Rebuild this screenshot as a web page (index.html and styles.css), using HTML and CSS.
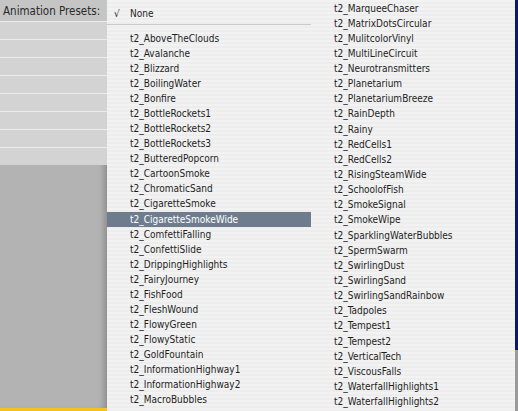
FILE: index.html
```html
<!DOCTYPE html>
<html>
<head>
<meta charset="utf-8">
<link rel="stylesheet" href="styles.css">
</head>
<body>
<div class="screen">
  <div class="side">
    <div class="label">Animation Presets:</div>
    <div class="rows">
      <div class="row"></div><div class="row"></div><div class="row"></div><div class="row"></div>
      <div class="row"></div><div class="row"></div><div class="row"></div><div class="row"></div>
    </div>
    <div class="fill"></div>
  </div>
  <div class="menu">
    <div class="col col1">
      <div class="item checked"><span class="check">√</span>None</div>
      <div class="sep"></div>
      <div class="item">t2_AboveTheClouds</div>
      <div class="item">t2_Avalanche</div>
      <div class="item">t2_Blizzard</div>
      <div class="item">t2_BoilingWater</div>
      <div class="item">t2_Bonfire</div>
      <div class="item">t2_BottleRockets1</div>
      <div class="item">t2_BottleRockets2</div>
      <div class="item">t2_BottleRockets3</div>
      <div class="item">t2_ButteredPopcorn</div>
      <div class="item">t2_CartoonSmoke</div>
      <div class="item">t2_ChromaticSand</div>
      <div class="item">t2_CigaretteSmoke</div>
      <div class="item selected">t2_CigaretteSmokeWide</div>
      <div class="item">t2_ComfettiFalling</div>
      <div class="item">t2_ConfettiSlide</div>
      <div class="item">t2_DrippingHighlights</div>
      <div class="item">t2_FairyJourney</div>
      <div class="item">t2_FishFood</div>
      <div class="item">t2_FleshWound</div>
      <div class="item">t2_FlowyGreen</div>
      <div class="item">t2_FlowyStatic</div>
      <div class="item">t2_GoldFountain</div>
      <div class="item">t2_InformationHighway1</div>
      <div class="item">t2_InformationHighway2</div>
      <div class="item">t2_MacroBubbles</div>
    </div>
    <div class="col col2">
      <div class="item">t2_MarqueeChaser</div>
      <div class="item">t2_MatrixDotsCircular</div>
      <div class="item">t2_MulitcolorVinyl</div>
      <div class="item">t2_MultiLineCircuit</div>
      <div class="item">t2_Neurotransmitters</div>
      <div class="item">t2_Planetarium</div>
      <div class="item">t2_PlanetariumBreeze</div>
      <div class="item">t2_RainDepth</div>
      <div class="item">t2_Rainy</div>
      <div class="item">t2_RedCells1</div>
      <div class="item">t2_RedCells2</div>
      <div class="item">t2_RisingSteamWide</div>
      <div class="item">t2_SchoolofFish</div>
      <div class="item">t2_SmokeSignal</div>
      <div class="item">t2_SmokeWipe</div>
      <div class="item">t2_SparklingWaterBubbles</div>
      <div class="item">t2_SpermSwarm</div>
      <div class="item">t2_SwirlingDust</div>
      <div class="item">t2_SwirlingSand</div>
      <div class="item">t2_SwirlingSandRainbow</div>
      <div class="item">t2_Tadpoles</div>
      <div class="item">t2_Tempest1</div>
      <div class="item">t2_Tempest2</div>
      <div class="item">t2_VerticalTech</div>
      <div class="item">t2_ViscousFalls</div>
      <div class="item">t2_WaterfallHighlights1</div>
      <div class="item">t2_WaterfallHighlights2</div>
    </div>
  </div>
  <div class="edge">
    <div class="edge-top"></div>
    <div class="edge-bottom"></div>
  </div>
</div>
</body>
</html>
```

FILE: styles.css
```css
html, body {
  margin: 0;
  padding: 0;
}
body {
  width: 518px;
  height: 411px;
  overflow: hidden;
  background: #b3b3b3;
}
.screen {
  display: flex;
  width: 518px;
  height: 411px;
}
.side {
  width: 107px;
  flex: none;
  display: flex;
  flex-direction: column;
  border-bottom: 3px solid #f2c21f;
  box-sizing: border-box;
  background: #b3b3b3;
  box-shadow: inset -7px 0 6px -4px rgba(0,0,0,0.22);
}
.label {
  height: 21px;
  box-sizing: border-box;
  padding: 4px 0 0 3px;
  background: #c5c5c5;
  font-family: "DejaVu Sans Condensed", "DejaVu Sans", sans-serif;
  font-size: 11.5px;
  color: #2a2a2a;
  white-space: nowrap;
}
.rows {
  background: #d3d3d3;
}
.row {
  height: 17px;
  border-top: 1px solid #ececec;
}
.fill {
  flex: 1;
}
.menu {
  flex: 1;
  display: flex;
  background: repeating-linear-gradient(to bottom, #f2f2f2 0, #f2f2f2 2px, #ededed 2px, #ededed 4px);
  font-family: "DejaVu Sans Condensed", "DejaVu Sans", sans-serif;
  font-size: 10px;
  color: #1e1e1e;
}
.col {
  display: flex;
  flex-direction: column;
}
.col1 {
  width: 204px;
  padding-top: 5.5px;
}
.col1 .item {
  height: 15.08px;
}
.col2 {
  flex: 1;
  padding-top: 0.5px;
}
.col2 .item {
  height: 15.15px;
}
.item {
  line-height: 15px;
  padding-left: 23px;
  white-space: nowrap;
}
.checked {
  padding-left: 7px;
}
.check {
  display: inline-block;
  width: 16px;
}
.sep {
  height: 1px;
  background: #c9c9c9;
  margin: 3px 0 6px;
}
.selected {
  background: #6e7c8d;
  color: #ffffff;
}
.edge {
  width: 3px;
  flex: none;
  display: flex;
  flex-direction: column;
}
.edge-top {
  height: 350px;
  background: #0d1a63;
}
.edge-bottom {
  flex: 1;
  background: #9a9a9a;
}
```
